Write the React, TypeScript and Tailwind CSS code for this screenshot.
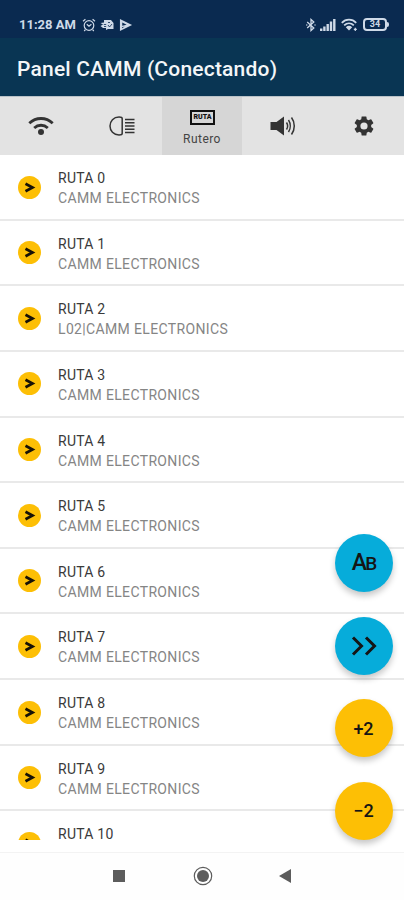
import type { ReactNode } from 'react'

const routes = [
  { name: 'RUTA 0', text: 'CAMM ELECTRONICS' },
  { name: 'RUTA 1', text: 'CAMM ELECTRONICS' },
  { name: 'RUTA 2', text: 'L02|CAMM ELECTRONICS' },
  { name: 'RUTA 3', text: 'CAMM ELECTRONICS' },
  { name: 'RUTA 4', text: 'CAMM ELECTRONICS' },
  { name: 'RUTA 5', text: 'CAMM ELECTRONICS' },
  { name: 'RUTA 6', text: 'CAMM ELECTRONICS' },
  { name: 'RUTA 7', text: 'CAMM ELECTRONICS' },
  { name: 'RUTA 8', text: 'CAMM ELECTRONICS' },
  { name: 'RUTA 9', text: 'CAMM ELECTRONICS' },
]

function StatusBar() {
  return (
    <div className="flex h-[38px] items-center bg-[#0a2a50] pt-[11px] pr-[15px] pl-[19px] text-[#cfdae8]">
      <span className="w-[57px] text-[13px] leading-none font-bold whitespace-nowrap">11:28 AM</span>
      <svg className="ml-[6px] h-[14px] w-[14px]" viewBox="0 0 14 14" fill="none" stroke="currentColor" strokeWidth="1.2">
        <circle cx="7" cy="7.5" r="4.8" />
        <path d="M1 3.2 3.4 1.2M13 3.2 10.6 1.2M4.8 6.3 7 8.3 9.4 6.3M3.4 11.6 2.2 13M10.6 11.6l1.2 1.4" />
      </svg>
      <svg className="ml-[4px] h-[12px] w-[14px]" viewBox="0 0 14 12">
        <path fill="currentColor" d="M4 1h7l2.5 3v6H8l-2 1V9H3L.5 7 3 5.5.5 4 4 3.5z" />
        <path fill="none" stroke="#0a2a50" strokeWidth="0.8" d="M3.8 5.5h2.4M4 7.5h2.2M8 3.5h2M8 6l1.5 2L12 5" />
      </svg>
      <svg className="ml-[5px] h-[14px] w-[14px]" viewBox="0 0 15 14">
        <path fill="currentColor" d="M1 .5 14 7 1 13.5z" />
        <path fill="#0a2a50" d="m3.5 4.2 4.7 2.6-4.7 1zM3.2 9.3l3-.6-3 1.8z" />
      </svg>

      <div className="ml-auto flex items-center">
        <svg className="h-[14px] w-[10px]" viewBox="0 0 10 14" fill="none" stroke="currentColor" strokeWidth="1.3">
          <path d="m1.2 4 6.6 6L5 12.5v-11L7.8 4l-6.6 6" />
          <path d="M.3 7h1M8.5 7h1" />
        </svg>
        <svg className="ml-[4px] h-[12px] w-[16px]" viewBox="0 0 16 12" fill="currentColor">
          <path d="M0 9.5h2.4V12H0zM3.2 7.5h2.4V12H3.2zM6.5 5h2.4v7H6.5zM9.8 2.5h2.4V12H9.8zM13.1 0h2.4v12h-2.4z" />
        </svg>
        <svg className="ml-[5px] h-[14px] w-[17px]" viewBox="0 0 17 14" fill="none" stroke="currentColor">
          <path strokeWidth="1.8" d="M.8 4.8c4-4.2 10.4-4.2 14.4 0M3.2 7.4c2.8-2.7 6.8-2.7 9.6 0" />
          <path fill="currentColor" stroke="none" d="M4.800 9.200c2-1.800 4.400-1.800 6.400 0L8 12.600z" />
          <path strokeWidth="1.2" d="M14.3 9.8v3.2M12.8 11.4h3" />
        </svg>
        <div className="ml-[5px] flex items-center">
          <div className="flex h-[13px] w-[24px] items-center justify-center rounded-[4px] border-2 border-current text-[9px] leading-none font-bold">
            34
          </div>
          <div className="h-[5px] w-[2px] rounded-r-sm bg-current" />
        </div>
      </div>
    </div>
  )
}

function Tab({ active, children }: { active?: boolean; children: ReactNode }) {
  return (
    <div className={`flex flex-1 flex-col items-center justify-center pb-px ${active ? 'bg-[#d6d6d6]' : ''}`}>
      {children}
    </div>
  )
}

function Tabs() {
  return (
    <div className="flex h-[59px] shrink-0 border-t border-[#b9c2c8] bg-[#e3e3e3] text-[#333]">
      <Tab>
        <svg className="ml-[2px] h-[20px] w-[26px]" viewBox="0 0 26 20" fill="none" stroke="currentColor" strokeWidth="2.8">
          <path d="M1.3 7.3c6.7-6.4 16.7-6.4 23.4 0M6.2 12c3.9-3.7 9.7-3.7 13.6 0" />
          <circle cx="13" cy="16" r="3" fill="currentColor" stroke="none" />
        </svg>
      </Tab>
      <Tab>
        <svg className="ml-[2px] h-[20px] w-[26px]" viewBox="0 0 26 20" fill="none" stroke="currentColor" strokeWidth="1.5">
          <path d="M10 1C4.5 1 1 5.2 1 10s3.5 9 9 9c1.8 0 3.2-.5 3.2-1.5v-15C13.2 1.5 11.8 1 10 1z" />
          <path d="M16 3.5h9.5M16 6.8h9.5M16 10h9.5M16 13.2h9.5M16 16.5h9.5" />
        </svg>
      </Tab>
      <Tab active>
        <div className="mt-[5px] ml-px flex h-[15px] w-[25px] items-center justify-center border-2 border-[#111] text-[7px] leading-none font-black text-[#111]">
          RUTA
        </div>
        <span className="mt-[7px] text-[12px] leading-[14px] tracking-[0.45px] text-[#444]">Rutero</span>
      </Tab>
      <Tab>
        <svg className="ml-px h-[20px] w-[26px]" viewBox="0 0 26 20" fill="none" stroke="currentColor" strokeWidth="1.5">
          <path fill="currentColor" stroke="none" d="M.5 6h6L14 .5v19L6.5 14h-6z" />
          <path d="M16.5 6.5c1.3 2 1.3 5 0 7M18.5 4c2.3 3.5 2.3 8.5 0 12M21.5 1.5c3.7 5 3.7 12 0 17" />
        </svg>
      </Tab>
      <Tab>
        <svg className="h-[24px] w-[24px]" viewBox="0 0 24 24" fill="currentColor">
          <path d="M19.14 12.94c.04-.3.06-.61.06-.94s-.02-.64-.07-.94l2.03-1.58a.49.49 0 0 0 .12-.61l-1.92-3.32a.488.488 0 0 0-.59-.22l-2.39.96c-.5-.38-1.03-.7-1.62-.94l-.36-2.54a.484.484 0 0 0-.48-.41h-3.84c-.24 0-.43.17-.47.41l-.36 2.54c-.59.24-1.13.57-1.62.94l-2.39-.96c-.22-.08-.47 0-.59.22L2.74 8.87c-.12.21-.08.47.12.61l2.03 1.58c-.05.3-.09.63-.09.94s.02.64.07.94l-2.03 1.58a.49.49 0 0 0-.12.61l1.92 3.32c.12.22.37.29.59.22l2.39-.96c.5.38 1.03.7 1.62.94l.36 2.54c.05.24.24.41.48.41h3.84c.24 0 .44-.17.47-.41l.36-2.54c.59-.24 1.13-.56 1.62-.94l2.39.96c.22.08.47 0 .59-.22l1.92-3.32c.12-.22.07-.47-.12-.61zM12 15.6a3.6 3.6 0 1 1 0-7.2 3.6 3.6 0 0 1 0 7.2z" />
        </svg>
      </Tab>
    </div>
  )
}

function RouteIcon() {
  return (
    <svg className="block h-[23px] w-[23px]" viewBox="0 0 23 23">
      <circle cx="11.5" cy="11.5" r="11.5" fill="#fdbf05" />
      <path fill="none" stroke="#171207" strokeWidth="2.7" d="m7.500 7.800 7 3.700-7 3.700" />
    </svg>
  )
}

function RouteRow({ name, text }: { name: string; text: string }) {
  return (
    <div className="flex h-[65.65px] shrink-0 border-b-2 border-[#e9e9e9] pt-[17px] pl-[18px]">
      <div className="mt-[3.5px]">
        <RouteIcon />
      </div>
      <div className="ml-[17px] flex flex-col gap-[8px] text-[14px] leading-[12px] whitespace-nowrap">
        <p className="tracking-[0.25px] text-[#3a3a3a]">{name}</p>
        <p className="tracking-[0.35px] text-[#858585]">{text}</p>
      </div>
    </div>
  )
}

// Last row, only its top is on screen
function PartialRow({ name }: { name: string }) {
  return (
    <div className="flex flex-1 pt-[17px] pl-[18px]">
      <div className="mt-[4px] h-[7.5px] overflow-hidden">
        <RouteIcon />
      </div>
      <p className="ml-[17px] text-[14px] leading-[12px] tracking-[0.25px] whitespace-nowrap text-[#3a3a3a]">{name}</p>
    </div>
  )
}

function Fab({ color, children }: { color: string; children: ReactNode }) {
  return (
    <button
      className={`flex h-[58px] w-[58px] items-center justify-center rounded-full text-[18px] font-medium text-[#151515] shadow-[0_4px_6px_rgba(0,0,0,0.22)] ${color}`}
    >
      {children}
    </button>
  )
}

function NavBar() {
  return (
    <div className="flex h-[48px] items-center border-t border-[#f3f3f3] bg-[#fefefe] pb-px pl-[113px] text-[#5c5c5c]">
      <div className="h-[12px] w-[12px] bg-current" />
      <svg className="ml-[68px] h-[20px] w-[20px]" viewBox="0 0 20 20">
        <circle cx="10" cy="10" r="8.7" fill="none" stroke="currentColor" strokeWidth="1.2" />
        <circle cx="10" cy="10" r="6" fill="currentColor" />
      </svg>
      <svg className="ml-[66px] h-[14px] w-[12px]" viewBox="0 0 12 14" fill="currentColor">
        <path d="M12 0v14L0 7z" />
      </svg>
    </div>
  )
}

export default function App() {
  return (
    <div className="relative flex h-[900px] w-[404px] flex-col overflow-hidden bg-white font-[Roboto,sans-serif]">
      <StatusBar />
      <header className="flex h-[58px] items-center bg-[#093553] pt-[5px] pl-[17px]">
        <h1 className="text-[21px] leading-none font-medium tracking-[0.2px] whitespace-nowrap text-[#f3f6f8]">
          Panel CAMM (Conectando)
        </h1>
      </header>
      <Tabs />
      <main className="flex h-[697px] shrink-0 flex-col">
        {routes.map((r) => (
          <RouteRow key={r.name} name={r.name} text={r.text} />
        ))}
        <PartialRow name="RUTA 10" />
      </main>
      <NavBar />

      {/* floating actions over the list */}
      <div className="absolute top-[534px] right-[11.5px] flex flex-col gap-[24.5px]">
        <Fab color="bg-[#06acda]">
          <span className="tracking-[-2px]">
            <span className="text-[23px]">A</span>
            <span className="text-[19px]">B</span>
          </span>
        </Fab>
        <Fab color="bg-[#06acda]">
          <svg className="h-[20px] w-[26px]" viewBox="0 0 26 20" fill="none" stroke="currentColor" strokeWidth="3">
            <path d="m2 1.500 8.500 8.500L2 18.500M15 1.500l8.500 8.500-8.500 8.500" />
          </svg>
        </Fab>
        <Fab color="bg-[#fdbf05]">+2</Fab>
        <Fab color="bg-[#fdbf05]">−2</Fab>
      </div>
    </div>
  )
}
